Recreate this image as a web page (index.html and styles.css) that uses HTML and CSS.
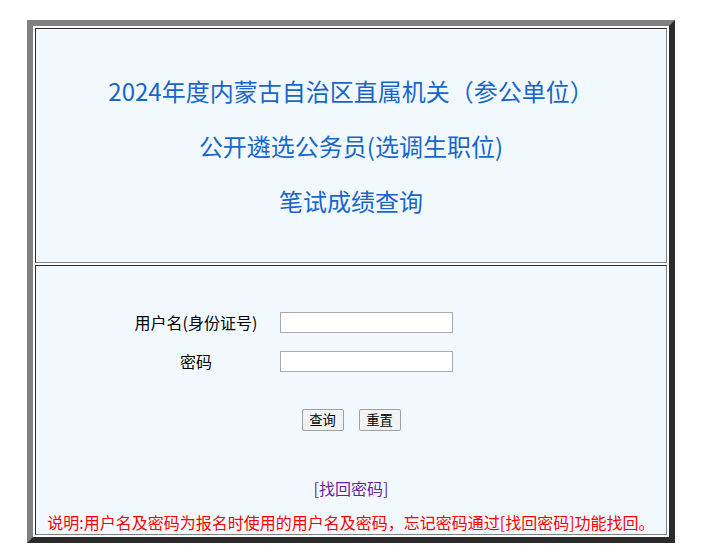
FILE: index.html
```html
<!DOCTYPE html>
<html lang="zh-CN">
<head>
<meta charset="utf-8">
<title>笔试成绩查询</title>
<link rel="stylesheet" href="styles.css">
</head>
<body>
<div class="frame">
  <div class="cell head">
    <div class="title">2024年度内蒙古自治区直属机关（参公单位）</div>
    <div class="title">公开遴选公务员(选调生职位)</div>
    <div class="title">笔试成绩查询</div>
  </div>
  <div class="cell body">
    <form class="form">
      <label class="lbl" for="u">用户名(身份证号)</label>
      <input class="txt" id="u" type="text">
      <label class="lbl" for="p">密码</label>
      <input class="txt" id="p" type="password">
    </form>
    <div class="btns">
      <button class="btn" type="button">查询</button>
      <button class="btn" type="button">重置</button>
    </div>
    <div class="find"><a class="link" href="#">[找回密码]</a></div>
    <div class="note">说明:用户名及密码为报名时使用的用户名及密码，忘记密码通过[找回密码]功能找回。</div>
  </div>
</div>
</body>
</html>
```
FILE: styles.css
```css
html, body {
  margin: 0;
  padding: 0;
  background: #ffffff;
}
body {
  font-family: "Noto Sans CJK SC", "Noto Sans", sans-serif;
  font-size: 16px;
  color: #000;
}
.frame {
  box-sizing: border-box;
  width: 648px;
  height: 523px;
  margin: 20px 0 0 27px;
  border-style: solid;
  border-width: 6px;
  border-color: #808080 #2b2b2b #2b2b2b #808080;
  padding: 2px;
  background: #ffffff;
  display: flex;
  flex-direction: column;
  gap: 2px;
}
.cell {
  box-sizing: border-box;
  background: #f2f9fe;
  border-style: solid;
  border-width: 1px;
  border-color: #2b2b2b #808080 #808080 #2b2b2b;
}
.head {
  height: 235px;
  padding-top: 34px;
  text-align: center;
}
.title {
  font-size: 24px;
  line-height: 55px;
  color: #1766cc;
}
.body {
  height: 270px;
  padding-top: 46px;
}
.form {
  margin: 0 0 0 76px;
  display: grid;
  grid-template-columns: 168px 173px;
  grid-auto-rows: 21px;
  row-gap: 18px;
  align-items: center;
}
.lbl {
  text-align: center;
  line-height: 21px;
  font-size: 16px;
}
.txt {
  box-sizing: border-box;
  width: 173px;
  height: 21px;
  margin: 0;
  padding: 1px 2px;
  border: 1px solid #a9a9a9;
  background: #fff;
  font: 13px "Noto Sans CJK SC", sans-serif;
}
.btns {
  margin-top: 37px;
  display: flex;
  justify-content: center;
  gap: 15px;
}
.btn {
  box-sizing: border-box;
  height: 22px;
  width: 42px;
  padding: 0;
  border: 1px solid #a0a0a0;
  border-radius: 2px;
  background: #f3f3f3;
  color: #000;
  font: 13.33px/20px "Noto Sans CJK SC", sans-serif;
}
.find {
  margin-top: 45px;
  text-align: center;
  line-height: 24px;
}
.link {
  color: #6c1f9e;
  text-decoration: none;
}
.note {
  margin-top: 12px;
  text-align: center;
  line-height: 20px;
  color: #ff0000;
}
```
